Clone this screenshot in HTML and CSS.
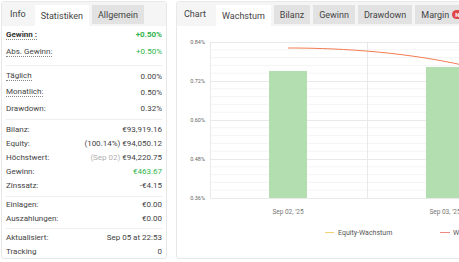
FILE: index.html
```html
<!doctype html>
<html>
<head>
<meta charset="utf-8">
<title>Statistiken</title>
<link rel="stylesheet" href="styles.css">
</head>
<body>
<div class="page">
	<div class="panel stats">
		<div class="tabs">
			<span class="tab title">Info</span>
			<span class="tab active">Statistiken</span>
			<span class="tab">Allgemein</span>
		</div>
		<div class="body">
			<div class="group g1">
				<div class="row"><span class="tip strong">Gewinn :</span><span class="pos strong">+0.50%</span></div>
				<div class="row"><span class="tip">Abs. Gewinn:</span><span class="pos">+0.50%</span></div>
			</div>
			<div class="group g2">
				<div class="row"><span class="tip">Täglich</span><span>0.00%</span></div>
				<div class="row"><span class="tip">Monatlich:</span><span>0.50%</span></div>
				<div class="row"><span>Drawdown:</span><span>0.32%</span></div>
			</div>
			<div class="group g3">
				<div class="row"><span>Bilanz:</span><span>€93,919.16</span></div>
				<div class="row"><span>Equity:</span><span>(100.14%) €94,050.12</span></div>
				<div class="row"><span>Höchstwert:</span><span><span class="muted">(Sep 02)</span> €94,220.75</span></div>
				<div class="row"><span>Gewinn:</span><span class="pos">€463.67</span></div>
				<div class="row"><span>Zinssatz:</span><span>-€4.15</span></div>
			</div>
			<div class="group g4">
				<div class="row"><span>Einlagen:</span><span>€0.00</span></div>
				<div class="row"><span>Auszahlungen:</span><span>€0.00</span></div>
			</div>
			<div class="group g5">
				<div class="row"><span>Aktualisiert:</span><span>Sep 05 at 22:53</span></div>
				<div class="row"><span>Tracking</span><span>0</span></div>
			</div>
		</div>
	</div>

	<div class="panel chart">
		<div class="tabs">
			<span class="tab title">Chart</span>
			<span class="tab active">Wachstum</span>
			<span class="tab">Bilanz</span>
			<span class="tab">Gewinn</span>
			<span class="tab">Drawdown</span>
			<span class="tab">Margin <span class="badge">NEU</span></span>
		</div>
		<svg class="plot" width="300" height="232" viewBox="0 0 300 232">
			<!-- minor grid -->
			<g stroke="#f4f4f4" stroke-width="1">
				<line x1="33" y1="23.8" x2="300" y2="23.8"/>
				<line x1="33" y1="31.6" x2="300" y2="31.6"/>
				<line x1="33" y1="39.4" x2="300" y2="39.4"/>
				<line x1="33" y1="47.2" x2="300" y2="47.2"/>
				<line x1="33" y1="62.8" x2="300" y2="62.8"/>
				<line x1="33" y1="70.6" x2="300" y2="70.6"/>
				<line x1="33" y1="78.4" x2="300" y2="78.4"/>
				<line x1="33" y1="86.2" x2="300" y2="86.2"/>
				<line x1="33" y1="101.8" x2="300" y2="101.8"/>
				<line x1="33" y1="109.6" x2="300" y2="109.6"/>
				<line x1="33" y1="117.4" x2="300" y2="117.4"/>
				<line x1="33" y1="125.2" x2="300" y2="125.2"/>
				<line x1="33" y1="140.8" x2="300" y2="140.8"/>
				<line x1="33" y1="148.6" x2="300" y2="148.6"/>
				<line x1="33" y1="156.4" x2="300" y2="156.4"/>
				<line x1="33" y1="164.2" x2="300" y2="164.2"/>
			</g>
			<!-- major grid -->
			<g stroke="#e9e9e9" stroke-width="1">
				<line x1="33" y1="16.5" x2="300" y2="16.5"/>
				<line x1="33" y1="55.5" x2="300" y2="55.5"/>
				<line x1="33" y1="94.5" x2="300" y2="94.5"/>
				<line x1="33" y1="133.5" x2="300" y2="133.5"/>
				<line x1="33" y1="172.5" x2="300" y2="172.5"/>
				<line x1="33.5" y1="16" x2="33.5" y2="173"/>
				<line x1="190.5" y1="16" x2="190.5" y2="173"/>
			</g>
			<g class="axis" text-anchor="end">
				<text x="28" y="18">0.84%</text>
				<text x="28" y="57">0.72%</text>
				<text x="28" y="96">0.60%</text>
				<text x="28" y="135">0.48%</text>
				<text x="28" y="174">0.36%</text>
			</g>
			<rect x="92" y="45" width="38" height="127" fill="#b3dfb0"/>
			<rect x="249" y="41" width="38" height="131" fill="#b3dfb0"/>
			<path d="M111 22 C150 22 220 24 290 40" fill="none" stroke="#f27b52" stroke-width="1"/>
			<g class="xaxis" text-anchor="middle">
				<text x="111" y="188">Sep 02, '25</text>
				<text x="268" y="188">Sep 03, '25</text>
			</g>
			<line x1="148" y1="206.5" x2="157" y2="206.5" stroke="#f3d36b" stroke-width="1"/>
			<text class="legend" x="161" y="209">Equity-Wachstum</text>
			<line x1="263" y1="206.5" x2="273" y2="206.5" stroke="#f08a80" stroke-width="1"/>
			<text class="legend" x="276" y="209">Wachstum</text>
		</svg>
	</div>
</div>
</body>
</html>
```

FILE: styles.css
```css
*{margin:0;padding:0;box-sizing:border-box;}
html,body{width:100%;height:100%;overflow:hidden;background:#fff;}
body{font-family:Roboto,'Liberation Sans',sans-serif;color:#444;}
.page{display:flex;align-items:flex-start;gap:9px;padding:1px 0 0 1px;}
.panel{border:1px solid #e8e8e8;border-radius:3px;overflow:hidden;background:#fff;flex-shrink:0;}
.stats{width:166px;height:258px;}
.chart{width:300px;height:258px;}
.tabs{display:flex;align-items:stretch;gap:3px;height:24px;background:#f5f5f5;font-size:9px;white-space:nowrap;}
.stats .tabs{gap:1px;}
.stats .tabs .tab:last-child{margin-left:2px;}
.tab{display:flex;align-items:center;padding:0 6px;margin:3px 0 2px;background:#e2e2e2;color:#444;}
.tab.title{background:none;padding:0 8px;margin:0;}
.chart .tab.title{padding:0 7px;}
.tab.active{background:#fff;margin-bottom:0;}
.badge{display:inline-block;margin-left:3px;padding:0 3px;height:9px;line-height:9px;border-radius:5px;background:#e04848;color:#fff;font-size:6px;font-weight:bold;}
.body{padding:0 4px 0 4px;font-size:8px;}
.group{border-top:1px solid #eee;}
.group:first-child{border-top:none;}
.row{display:flex;justify-content:space-between;align-items:center;white-space:nowrap;}
.g1{padding-bottom:5px;}
.g1 .row{height:17px;}
.g2{padding:2px 0 3px;}
.g2 .row{height:16px;}
.g3{padding:2px 0 4px;}
.g3 .row{height:14px;}
.g4{padding:0 0 3px;}
.g4 .row{height:14px;}
.g5{padding:1px 0 0;}
.g5 .row{height:14px;}
.tip{border-bottom:1px dotted #888;line-height:9px;}
.strong{font-weight:bold;color:#333;}
.pos{color:#2fb34a;}
.muted{color:#b0b0b0;}
.plot{display:block;}
.axis{font-size:5.5px;fill:#666;}
.xaxis{font-size:6.5px;fill:#777;}
.legend{font-size:7px;fill:#555;}
```
